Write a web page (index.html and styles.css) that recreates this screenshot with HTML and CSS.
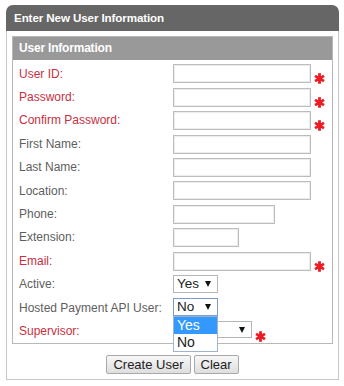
FILE: index.html
```html
<!DOCTYPE html>
<html>
<head>
<meta charset="utf-8">
<link rel="stylesheet" href="styles.css">
</head>
<body>
<div class="panel">
  <div class="panel-head">Enter New User Information</div>
  <div class="panel-body">
    <div class="section">
      <div class="section-head">User Information</div>
      <div class="form">
        <label class="lbl req">User ID:</label>
        <div class="field"><input class="txt long" type="text"><svg class="ast" viewBox="0 0 10 10"><path d="M5 0.3V9.7M0.9 2.6L9.1 7.4M0.9 7.4L9.1 2.6"/></svg></div>
        <label class="lbl req">Password:</label>
        <div class="field"><input class="txt long" type="password"><svg class="ast" viewBox="0 0 10 10"><path d="M5 0.3V9.7M0.9 2.6L9.1 7.4M0.9 7.4L9.1 2.6"/></svg></div>
        <label class="lbl req">Confirm Password:</label>
        <div class="field"><input class="txt long" type="password"><svg class="ast" viewBox="0 0 10 10"><path d="M5 0.3V9.7M0.9 2.6L9.1 7.4M0.9 7.4L9.1 2.6"/></svg></div>
        <label class="lbl">First Name:</label>
        <div class="field"><input class="txt long" type="text"></div>
        <label class="lbl">Last Name:</label>
        <div class="field"><input class="txt long" type="text"></div>
        <label class="lbl">Location:</label>
        <div class="field"><input class="txt long" type="text"></div>
        <label class="lbl">Phone:</label>
        <div class="field"><input class="txt mid" type="text"></div>
        <label class="lbl">Extension:</label>
        <div class="field"><input class="txt short" type="text"></div>
        <label class="lbl req">Email:</label>
        <div class="field"><input class="txt long" type="text"><svg class="ast" viewBox="0 0 10 10"><path d="M5 0.3V9.7M0.9 2.6L9.1 7.4M0.9 7.4L9.1 2.6"/></svg></div>
        <label class="lbl">Active:</label>
        <div class="field"><div class="sel yn">Yes<span class="arr"></span></div></div>
        <label class="lbl">Hosted Payment API User:</label>
        <div class="field">
          <div class="sel yn focus">No<span class="arr"></span></div>
          <div class="droplist">
            <div class="opt on">Yes</div>
            <div class="opt">No</div>
          </div>
        </div>
        <label class="lbl req">Supervisor:</label>
        <div class="field"><div class="sel sup"><span class="arr"></span></div><svg class="ast" viewBox="0 0 10 10"><path d="M5 0.3V9.7M0.9 2.6L9.1 7.4M0.9 7.4L9.1 2.6"/></svg></div>
      </div>
    </div>
    <div class="actions">
      <button class="btn" type="button">Create User</button>
      <button class="btn" type="button">Clear</button>
    </div>
  </div>
</div>
</body>
</html>
```
FILE: styles.css
```css
html, body {
  margin: 0;
  background: #fff;
}
body {
  padding: 5px 0 0 6px;
  font-family: "Liberation Sans", Arial, sans-serif;
}
.panel {
  width: 333px;
}
.panel-head {
  height: 26px;
  line-height: 26px;
  background: #666;
  color: #fff;
  font-weight: bold;
  font-size: 11.6px;
  letter-spacing: -0.1px;
  padding-left: 8px;
  border-radius: 7px 7px 0 0;
}
.panel-body {
  border: 1px solid #c6c6c6;
  border-top: 0;
  padding: 5px;
}
.section {
  border: 1px solid #b8b8b8;
}
.section-head {
  height: 23px;
  line-height: 23px;
  background: #999;
  color: #fff;
  font-weight: bold;
  font-size: 12px;
  letter-spacing: -0.2px;
  padding-left: 6px;
}
.form {
  display: grid;
  grid-template-columns: 154px 1fr;
  grid-auto-rows: 23.4px;
  padding: 2px 0 0 6px;
}
.lbl {
  display: flex;
  align-items: center;
  font-size: 12px;
  color: #5e5e5e;
  white-space: nowrap;
}
.lbl.req {
  color: #c9303f;
}
.field {
  display: flex;
  align-items: flex-end;
  padding-bottom: 2px;
  gap: 3px;
  position: relative;
}
.txt {
  flex: none;
  box-sizing: border-box;
  height: 19px;
  margin: 0;
  padding: 1px 3px;
  border: 1px solid #bdbdbd;
  box-shadow: inset 0 0 0 1px #ececec;
  background: #fff;
  font-family: "Liberation Sans", Arial, sans-serif;
  font-size: 12px;
}
.txt.long { width: 138px; }
.txt.mid { width: 102px; }
.txt.short { width: 66px; }
.ast {
  width: 11px;
  height: 11px;
  flex: none;
  margin-bottom: -1px;
}
.ast path {
  stroke: #ec1c24;
  stroke-width: 2.6;
  fill: none;
}
.sel {
  flex: none;
  box-sizing: border-box;
  height: 18px;
  border: 1px solid #b5b5b5;
  background: #fff;
  font-size: 13.5px;
  line-height: 16px;
  color: #222;
  padding-left: 3px;
  position: relative;
}
.yn { width: 45px; margin-bottom: 1px; }
.sup { width: 79px; height: 17px; margin-bottom: 3px; }
.sel.focus {
  border-color: #7d9ccb;
}
.arr {
  position: absolute;
  right: 6px;
  top: 5px;
  width: 0;
  height: 0;
  border-left: 3.5px solid transparent;
  border-right: 3.5px solid transparent;
  border-top: 6px solid #111;
}
.droplist {
  position: absolute;
  left: 0;
  top: 20px;
  width: 45px;
  box-sizing: border-box;
  border: 1px solid #9fb3cf;
  background: #fff;
  z-index: 2;
}
.opt {
  height: 17px;
  line-height: 17px;
  font-size: 14px;
  padding-left: 3px;
  color: #222;
}
.opt.on {
  background: #3399ff;
  color: #fff;
}
.actions {
  display: flex;
  justify-content: center;
  gap: 3px;
  margin-top: 11px;
}
.btn {
  height: 19px;
  margin: 0;
  padding: 0 6px;
  font-family: "Liberation Sans", Arial, sans-serif;
  font-size: 13px;
  color: #222;
  border: 1px solid #a9a9a9;
  border-radius: 2px;
  background: linear-gradient(#f7f7f7, #dedede);
}
```
